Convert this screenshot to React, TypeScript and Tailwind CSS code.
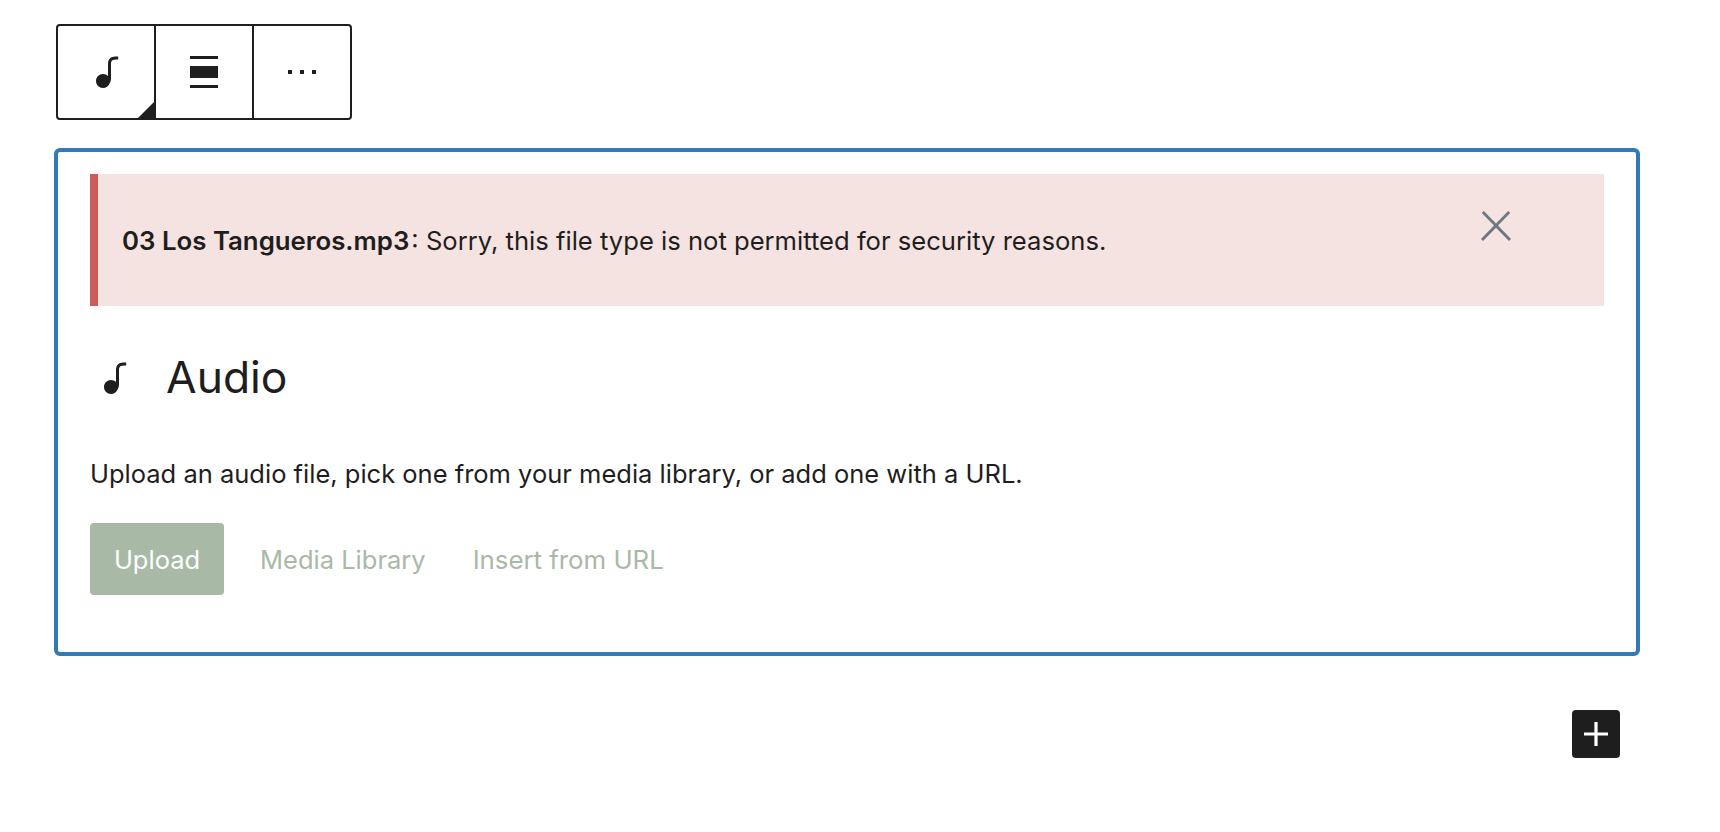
import React from 'react';

function NoteIcon() {
  return (
    <svg viewBox="0 0 24 24" className="w-12 h-12 fill-[#1e1e1e]">
      <path d="M17.7 4.3c-1.2 0-2.8 0-3.8 1-.6.6-.9 1.5-.9 2.6V14c-.6-.6-1.5-1-2.5-1C8.6 13 7 14.6 7 16.5S8.6 20 10.5 20c1.5 0 2.8-1 3.3-2.3.5-.8.7-1.8.7-2.5V7.9c0-.7.2-1.2.5-1.6.6-.6 1.8-.6 2.8-.6h.3V4.3h-.6z" />
    </svg>
  );
}

function Toolbar() {
  return (
    <div className="flex w-[296px] h-[96px] ml-[56px] border-2 border-[#1e1e1e] rounded-[4px]">
      <button className="relative w-[98px] flex items-center justify-center border-r-2 border-[#1e1e1e]">
        <NoteIcon />
        {/* little corner marker for block variations */}
        <svg viewBox="0 0 16 16" className="absolute right-0 bottom-0 w-4 h-4 fill-[#1e1e1e]">
          <path d="M16 0V16H0Z" />
        </svg>
      </button>
      <button className="w-[98px] flex items-center justify-center border-r-2 border-[#1e1e1e]">
        <svg viewBox="0 0 24 24" className="w-12 h-12 fill-[#1e1e1e]">
          <path d="M19 5.5H5V4h14v1.5ZM19 20H5v-1.5h14V20ZM5 9h14v6H5V9Z" />
        </svg>
      </button>
      <button className="flex-1 flex items-center justify-center">
        <svg viewBox="0 0 24 24" className="w-12 h-12 fill-[#1e1e1e]">
          <path d="M11 13h2v-2h-2v2zm-6 0h2v-2H5v2zm12-2v2h2v-2h-2z" />
        </svg>
      </button>
    </div>
  );
}

function Notice() {
  return (
    <div className="flex items-start justify-between h-[132px] bg-[#f5e3e1] border-l-8 border-[#cc5c5c] pl-6 pr-[84px]">
      <p className="mt-[47px] text-[25.6px] leading-[40px] text-[#1e1e1e]">
        <strong className="font-semibold text-[25.8px] mr-[2px]">03 Los Tangueros.mp3</strong>: Sorry, this file type is not permitted for security reasons.
      </p>
      <svg viewBox="0 0 24 24" className="mt-[28px] w-12 h-12 fill-[#6c7781]">
        <path d="M13 11.8l6.1-6.3-1-1-6.1 6.2-6.1-6.2-1 1 6.1 6.3-6.5 6.7 1 1 6.5-6.6 6.5 6.6 1-1z" />
      </svg>
    </div>
  );
}

export default function App() {
  return (
    <div className="min-h-[832px] bg-white pt-6 font-['Inter',sans-serif] text-[#1e1e1e]">
      <Toolbar />

      <div className="mt-7 ml-[54px] w-[1586px] h-[508px] border-4 border-[#3379b5] rounded-[6px] px-8 pt-[22px]">
        <Notice />

        <div className="mt-[35px] flex items-center h-[72px] text-[44.4px] leading-[72px]">
          <span className="mr-[28px] mt-[1px]">
            <NoteIcon />
          </span>
          Audio
        </div>

        <p className="mt-[41px] text-[25.5px] leading-[40px]">
          Upload an audio file, pick one from your media library, or add one with a URL.
        </p>

        <div className="mt-[29px] flex items-center text-[25.5px]">
          <button className="w-[134px] h-[72px] pt-[2px] rounded-[4px] bg-[#a8b9a6] text-white">Upload</button>
          <span className="ml-[36px] pt-[2px] text-[#a8b9a6]">Media Library</span>
          <span className="ml-[47px] pt-[2px] text-[25.8px] text-[#a8b9a6]">Insert from URL</span>
        </div>
      </div>

      <div className="mt-[54px] ml-[1572px] w-12 h-12 rounded-[4px] bg-[#1e1e1e] flex items-center justify-center">
        <svg viewBox="0 0 24 24" className="w-12 h-12 fill-white">
          <path d="M18 11.2h-5.2V6h-1.6v5.2H6v1.6h5.2V18h1.6v-5.2H18z" />
        </svg>
      </div>
    </div>
  );
}
